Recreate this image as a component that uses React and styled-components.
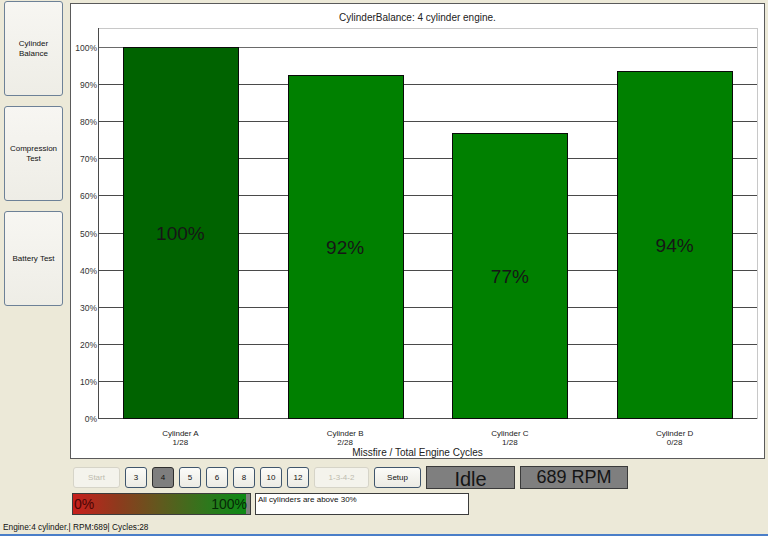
import React from 'react';
import styled, { createGlobalStyle } from 'styled-components';

const Global = createGlobalStyle`
  html, body { margin: 0; padding: 0; background: #ece9d8; }
  body { font-family: "Liberation Sans", Arial, sans-serif; }
`;

const Window = styled.div`
  width: 768px;
  height: 536px;
  background: #ece9d8;
  display: flex;
  flex-direction: column;
  box-sizing: border-box;
  border-bottom: 2px solid #4a7ec8;
  overflow: hidden;
`;

const TopArea = styled.div`
  display: flex;
  align-items: flex-start;
`;

const Sidebar = styled.div`
  display: flex;
  flex-direction: column;
  gap: 10px;
  padding: 1px 0 0 4px;
  width: 59px;
`;

const SideButton = styled.button`
  width: 59px;
  height: 95px;
  box-sizing: border-box;
  border: 1px solid #6d8197;
  border-radius: 3px;
  background: linear-gradient(#f7f6f2, #eeede6);
  font-family: "Liberation Sans", Arial, sans-serif;
  font-size: 8px;
  line-height: 10px;
  color: #111;
  padding: 0 2px;
  cursor: default;
`;

const ChartPanel = styled.div`
  margin: 3px 0 0 7px;
  width: 695px;
  height: 456px;
  box-sizing: border-box;
  border: 1px solid #5a5a5a;
  background: #fff;
  display: flex;
`;

const Controls = styled.div`
  display: flex;
  align-items: center;
  gap: 5px;
  margin: 7px 0 0 73px;
  height: 23px;
`;

const Btn = styled.button`
  width: ${p => p.$w || 22}px;
  height: 21px;
  box-sizing: border-box;
  padding: 0;
  border-radius: 3px;
  font-family: "Liberation Sans", Arial, sans-serif;
  font-size: 8px;
  cursor: default;
  border: 1px solid ${p => (p.$active ? '#2e2e2e' : p.disabled ? '#d6d4c8' : '#3f556c')};
  background: ${p =>
    p.$active ? '#7e7e7e' : p.disabled ? '#f4f3ec' : 'linear-gradient(#fbfbf8, #ecebe4)'};
  color: ${p => (p.disabled ? '#bdbbae' : '#111')};
`;

const Readout = styled.div`
  width: ${p => p.$w}px;
  height: 23px;
  box-sizing: border-box;
  border: 1px solid #3a3a3a;
  background: #7f7f7f;
  color: #151515;
  font-size: ${p => p.$size}px;
  display: flex;
  align-items: center;
  justify-content: center;
  padding-top: ${p => p.$drop || 0}px;
`;

const InfoRow = styled.div`
  display: flex;
  gap: 4px;
  margin: 4px 0 0 72px;
`;

const Gauge = styled.div`
  width: 179px;
  height: 22px;
  box-sizing: border-box;
  border: 1px solid #3c3c3c;
  background: linear-gradient(to right, #c81f1c 0%, #8e3a1d 25%, #5f5a1e 50%, #2a7a1c 78%, #0d8a14 97.6%, #808080 97.6%);
  display: flex;
  align-items: center;
  justify-content: space-between;
  padding: 0 3px 0 1px;
  font-size: 14px;
`;

const GaugeText = styled.span`
  color: ${p => p.$c};
`;

const Message = styled.div`
  width: 214px;
  height: 22px;
  box-sizing: border-box;
  border: 1px solid #3c3c3c;
  background: #fff;
  font-size: 8px;
  padding: 1px 2px;
  color: #111;
`;

const StatusBar = styled.div`
  margin-top: auto;
  padding: 0 0 2px 3px;
  font-size: 8.3px;
  color: #111;
`;

const bars = [
  { name: 'Cylinder A', count: '1/28', value: 100, label: '100%', color: '#006300' },
  { name: 'Cylinder B', count: '2/28', value: 92.5, label: '92%', color: '#008000' },
  { name: 'Cylinder C', count: '1/28', value: 76.8, label: '77%', color: '#008000' },
  { name: 'Cylinder D', count: '0/28', value: 93.6, label: '94%', color: '#008000' },
];

const PX = 27, PY = 24, PW = 659, BASE = 414, STEP = 37.1;
const SLOT = PW / 4, BW = 115;

function Chart() {
  const ticks = Array.from({ length: 11 }, (_, k) => k);
  return (
    <svg width="693" height="454" fontFamily='"Liberation Sans", Arial, sans-serif'>
      <text x="346.5" y="17" fontSize="10" textAnchor="middle" fill="#222">
        CylinderBalance: 4 cylinder engine.
      </text>
      <rect x={PX + 0.5} y={PY + 0.5} width={PW} height={BASE - PY} fill="#fff" stroke="#c8c8c8" />
      {ticks.map(k => {
        const y = Math.round(BASE - k * STEP) + 0.5;
        return (
          <g key={k}>
            <line x1={PX} x2={PX + PW} y1={y} y2={y} stroke={k === 10 ? '#6a6a6a' : '#4a4a4a'} />
            <text x={PX - 1} y={y + 3} fontSize="8.5" textAnchor="end" fill="#333">{k * 10}%</text>
          </g>
        );
      })}
      <line x1={PX + 0.5} x2={PX + 0.5} y1={PY} y2={BASE} stroke="#4a4a4a" />
      {bars.map((b, i) => {
        const x = Math.round(PX + SLOT * i + (SLOT - BW) / 2) + 0.5;
        const top = Math.round(BASE - (b.value / 100) * STEP * 10) + 0.5;
        const cx = PX + SLOT * (i + 0.5);
        return (
          <g key={b.name}>
            <rect x={x} y={top} width={BW} height={BASE + 0.5 - top} fill={b.color} stroke="#0a0a0a" />
            <text x={cx} y={(top + BASE) / 2 + 7} fontSize="19" textAnchor="middle" fill="#161616">{b.label}</text>
            <text x={cx} y="432" fontSize="8" textAnchor="middle" fill="#222">{b.name}</text>
            <text x={cx} y="441" fontSize="8" textAnchor="middle" fill="#222">{b.count}</text>
          </g>
        );
      })}
      <text x="346.5" y="452" fontSize="10" textAnchor="middle" fill="#222">
        Missfire / Total Engine Cycles
      </text>
    </svg>
  );
}

const counts = ['3', '4', '5', '6', '8', '10', '12'];

export default function App() {
  return (
    <Window>
      <Global />
      <TopArea>
        <Sidebar>
          <SideButton>Cylinder<br />Balance</SideButton>
          <SideButton>Compression<br />Test</SideButton>
          <SideButton>Battery Test</SideButton>
        </Sidebar>
        <ChartPanel>
          <Chart />
        </ChartPanel>
      </TopArea>
      <Controls>
        <Btn $w={47} disabled>Start</Btn>
        {counts.map(c => (
          <Btn key={c} $active={c === '4'}>{c}</Btn>
        ))}
        <Btn $w={55} disabled>1-3-4-2</Btn>
        <Btn $w={47}>Setup</Btn>
        <Readout $w={89} $size={20} $drop={3}>Idle</Readout>
        <Readout $w={108} $size={18}>689 RPM</Readout>
      </Controls>
      <InfoRow>
        <Gauge>
          <GaugeText $c="#4a0606">0%</GaugeText>
          <GaugeText $c="#062806">100%</GaugeText>
        </Gauge>
        <Message>All cylinders are above 30%</Message>
      </InfoRow>
      <StatusBar>Engine:4 cylinder.| RPM:689| Cycles:28</StatusBar>
    </Window>
  );
}
